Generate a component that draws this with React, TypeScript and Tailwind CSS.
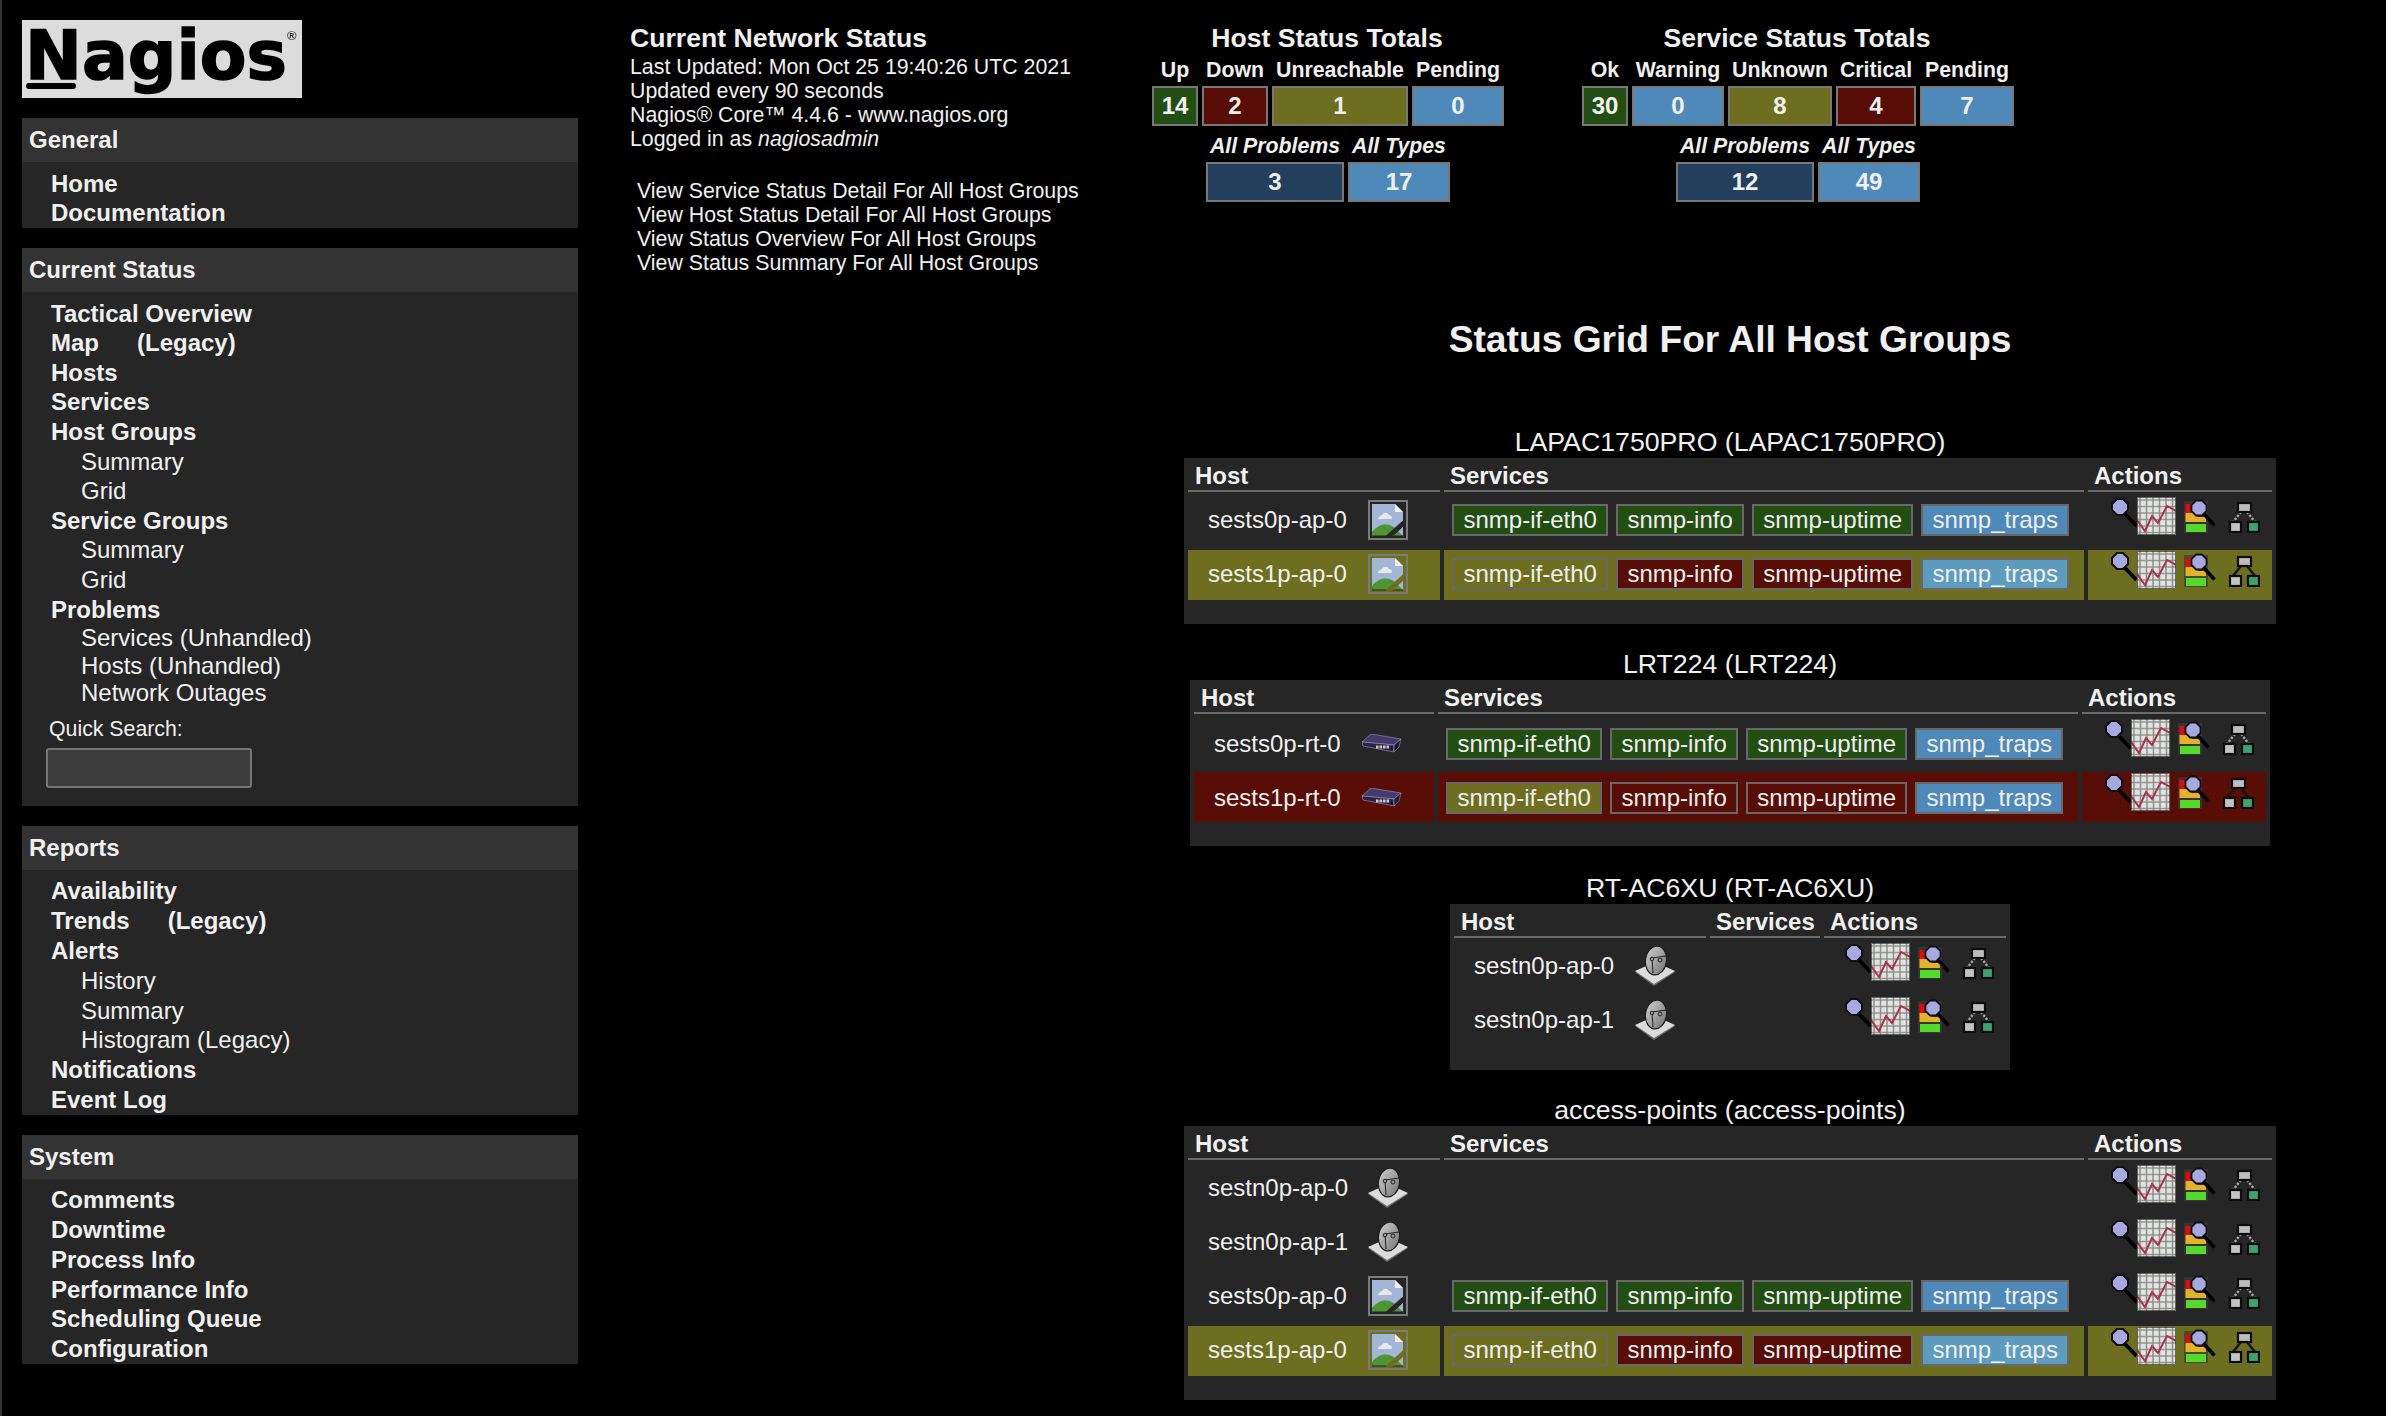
import React from "react";

const FONT = "font-['Liberation_Sans',Arial,sans-serif]";

function Magnifier() {
  return (
    <svg width="27" height="30" viewBox="0 0 27 30" className="shrink-0 mt-px">
      <line x1="13" y1="15" x2="25.5" y2="28" stroke="#000" strokeWidth="3.8" />
      <polygon points="6,1 12,1 17,6 17,12 12,17 6,17 1,12 1,6" fill="#a9a9e2" stroke="#111" strokeWidth="2" />
    </svg>
  );
}

function Chart() {
  const lines = [3, 9.5, 16, 22.5, 29, 35.5];
  return (
    <svg width="39" height="38" viewBox="0 0 39 38" className="shrink-0 -ml-px blur-[0.3px]">
      <rect x="0" y="0" width="39" height="38" fill="#e2e2e2" />
      {lines.map((v) => (
        <g key={v}>
          <line x1={v} y1="0" x2={v} y2="38" stroke="#828282" strokeWidth="1.5" opacity="0.85" />
          <line x1="0" y1={v} x2="39" y2={v} stroke="#84907f" strokeWidth="1.5" opacity="0.85" />
        </g>
      ))}
      <polyline points="0,23 8,34 15,19 21,26 30,9 39,14" fill="none" stroke="#a8324f" strokeWidth="2" />
      <rect x="0.5" y="0.5" width="38" height="37" fill="none" stroke="#333" strokeWidth="1" opacity="0.7" />
    </svg>
  );
}

function StatusMap() {
  return (
    <svg width="32" height="32" viewBox="0 0 32 32" className="shrink-0 ml-2 mt-1 overflow-visible">
      <rect x="0" y="0" width="24" height="32" fill="#3a3a3a" opacity="0.7" />
      <rect x="1.5" y="3" width="5" height="9" fill="#d80e0e" />
      <path d="M1.5 12 H10 L14 16 H22 V21 H1.5 Z" fill="#e4b12e" />
      <rect x="2" y="23" width="20" height="8" fill="#55d92d" />
      <line x1="19" y1="12" x2="30.5" y2="24.5" stroke="#000" strokeWidth="3.6" />
      <polygon points="12,-0.5 18,-0.5 22.5,4 22.5,10 18,14.5 12,14.5 7.5,10 7.5,4" fill="#a9a9e2" stroke="#111" strokeWidth="1.8" />
    </svg>
  );
}

function Hierarchy({ dark }: { dark: boolean }) {
  return (
    <svg width="32" height="32" viewBox="0 0 32 32" className="shrink-0 ml-3 mt-1">
      <g stroke={dark ? "#141414" : "#a8a8a8"} strokeWidth="2.4" strokeDasharray={dark ? undefined : "2.4 1.4"} fill="none">
        <line x1="13" y1="11" x2="5" y2="21" />
        <line x1="19" y1="11" x2="27" y2="21" />
      </g>
      <rect x="10" y="2" width="13" height="9" fill="#bdbdbd" stroke="#0c0c0c" strokeWidth="2.2" />
      <rect x="2" y="21" width="11" height="10" fill="#c3c3c3" stroke="#0c0c0c" strokeWidth="2.2" />
      <rect x="20" y="21" width="11" height="10" fill="#3fa36f" stroke="#0c0c0c" strokeWidth="2.2" />
    </svg>
  );
}

function BrokenImage({ slash }: { slash: string }) {
  return (
    <span className="flex h-10 w-10 shrink-0 items-center justify-center border-2 border-[#7b7b7b]">
      <svg width="36" height="36" viewBox="0 0 36 36">
        <path d="M2 2 H25 L33 10 V34 H2 Z" fill="#a3b6d6" />
        <path d="M25 2 L33 10 H25 Z" fill="#f0f0f0" />
        <path d="M8 17 C8 14 11 14 12 13 C13 10 18 10 19 13 C22 13 23 17 21 17 Z" fill="#e8e8ea" />
        <path d="M2 34 V30 C8 22 18 20 25 26 L33 34 Z" fill="#4d9434" />
        <path d="M2 34 H33" stroke="#222" strokeWidth="1" />
        <line x1="17" y1="36" x2="36" y2="19" stroke={slash} strokeWidth="5" />
      </svg>
    </span>
  );
}

function Router() {
  return (
    <svg width="40" height="19" viewBox="0 0 40 19" className="shrink-0">
      <polygon points="0,8 9,0 39,5 32,11" fill="#453a70" stroke="#b5b1c4" strokeWidth="0.5" />
      <polygon points="0,8 32,11 32,18 1,12" fill="#2a2348" stroke="#b5b1c4" strokeWidth="0.5" />
      <polygon points="32,11 39,5 37,13 32,18" fill="#1d1838" stroke="#b5b1c4" strokeWidth="0.5" />
      {[14, 17.5, 21, 24.5].map((x) => (
        <rect key={x} x={x} y="11.5" width="2.6" height="3" fill="#c9c9d2" />
      ))}
      <rect x="29" y="14" width="2" height="2" fill="#0c0c0c" />
    </svg>
  );
}

function Dish() {
  return (
    <svg width="40" height="40" viewBox="0 0 40 40" className="shrink-0">
      <defs>
        <linearGradient id="dishfill" x1="0" y1="0" x2="1" y2="0.6">
          <stop offset="0" stopColor="#cfcfcf" />
          <stop offset="0.55" stopColor="#a6a6a6" />
          <stop offset="1" stopColor="#808080" />
        </linearGradient>
      </defs>
      <polygon points="0,26 20,17 40,26 19,40" fill="#6e6e6e" />
      <polygon points="0,25 20,16 40,25 19,38" fill="#dcdcdc" />
      <ellipse cx="21" cy="14.5" rx="10.5" ry="14.5" fill="url(#dishfill)" stroke="#1c1c1c" strokeWidth="1.2" transform="rotate(8 21 14.5)" />
      <line x1="17" y1="12" x2="18" y2="27" stroke="#222" strokeWidth="1" />
      <line x1="17" y1="12" x2="31" y2="10" stroke="#222" strokeWidth="1" />
      <circle cx="17" cy="13" r="1.8" fill="#999" stroke="#222" strokeWidth="1" />
      <circle cx="25" cy="14" r="2" fill="#999" stroke="#222" strokeWidth="1" />
    </svg>
  );
}

type PillKind = "ok" | "warn" | "crit" | "pend" | "pendlight";
const pillClass: Record<PillKind, string> = {
  ok: "bg-[#234e13]",
  warn: "bg-[#6e6e20]",
  crit: "bg-[#580d07]",
  pend: "bg-[#4e89b9]",
  pendlight: "bg-[#5d9cbf]",
};

function Pill({ kind, children }: { kind: PillKind; children: React.ReactNode }) {
  return (
    <span className={`flex h-8 items-center border-2 border-[#686868] px-[9.5px] ${pillClass[kind]}`}>{children}</span>
  );
}

function Services({ state }: { state: "ok" | "warnRow" | "critRow" }) {
  const k: PillKind[] =
    state === "ok"
      ? ["ok", "ok", "ok", "pend"]
      : state === "warnRow"
        ? ["warn", "crit", "crit", "pendlight"]
        : ["warn", "crit", "crit", "pend"];
  return (
    <div className="flex items-center gap-[7.5px] pl-2">
      <Pill kind={k[0]}>snmp-if-eth0</Pill>
      <Pill kind={k[1]}>snmp-info</Pill>
      <Pill kind={k[2]}>snmp-uptime</Pill>
      <Pill kind={k[3]}>snmp_traps</Pill>
    </div>
  );
}

type RowData = {
  name: string;
  icon: "broken" | "router" | "dish";
  state?: "ok" | "warnRow" | "critRow";
  services?: boolean;
};

function GridTable({
  title,
  rows,
  width,
  col1,
  col2,
  col3,
  nameW,
  titleClass,
  nudge,
}: {
  title: string;
  rows: RowData[];
  width: string;
  col1: string;
  col2: string;
  col3: string;
  nameW: string;
  titleClass: string;
  nudge: string;
}) {
  const bgFor = (s?: string) => (s === "warnRow" ? "bg-[#6e6e20]" : s === "critRow" ? "bg-[#580d07]" : "");
  const th = "h-[30px] border-b-2 border-[#6a6a6a] pl-[7px] font-bold leading-[28px]";
  const th2 = "h-[30px] border-b-2 border-[#6a6a6a] pl-[6px] font-bold leading-[28px]";
  return (
    <section className={`flex flex-col items-center ${titleClass}`}>
      <h2 className="h-8 text-center text-[26.7px] font-normal leading-8 text-[#f0f0f0]">{title}</h2>
      <div className={`flex flex-col gap-1 bg-[#262626] p-1 pb-6 ${width}`}>
        <div className="flex gap-1">
          <div className={`${th} ${col1}`}>Host</div>
          <div className={`${th2} ${col2}`}>Services</div>
          <div className={`${th2} ${col3}`}>Actions</div>
        </div>
        {rows.map((r, i) => {
          const bg = bgFor(r.state);
          return (
            <div key={i} className="flex h-[50px] gap-1">
              <div className={`flex items-center pl-5 ${nudge} ${col1} ${bg}`}>
                <span className={nameW}>{r.name}</span>
                {r.icon === "broken" && <BrokenImage slash={r.state === "warnRow" ? "#6e6e20" : "#262626"} />}
                {r.icon === "router" && <Router />}
                {r.icon === "dish" && <Dish />}
              </div>
              <div className={`flex items-center ${nudge} ${col2} ${bg}`}>
                {r.services && <Services state={r.state ?? "ok"} />}
              </div>
              <div className={`flex items-start justify-end pr-3 pt-px ${col3} ${bg}`}>
                <Magnifier />
                <Chart />
                <StatusMap />
                <Hierarchy dark={!!r.state && r.state !== "ok"} />
              </div>
            </div>
          );
        })}
      </div>
    </section>
  );
}

function Box({ w, bg, label, value, italic }: { w: string; bg: string; label: string; value: string; italic?: boolean }) {
  return (
    <div className={`flex flex-col items-center ${w}`}>
      <div className={`h-8 whitespace-nowrap text-[21.3px] font-bold leading-8 ${italic ? "italic" : ""}`}>{label}</div>
      <div className={`flex h-10 w-full items-center justify-center border-2 border-[#777777] text-[24px] font-bold ${bg}`}>{value}</div>
    </div>
  );
}

const G = "bg-[#234e13]";
const R = "bg-[#580d07]";
const O = "bg-[#6e6e20]";
const B = "bg-[#4e89b9]";
const D = "bg-[#223f5c]";

function Totals() {
  return (
    <div className="flex pt-4">
      <div className="flex w-[352px] flex-col">
        <h2 className="h-[38px] pt-[6px] text-center text-[26.6px] font-bold leading-[32px] pr-[2px]">Host Status Totals</h2>
        <div className="flex gap-1">
          <Box w="w-[46px]" bg={G} label="Up" value="14" />
          <Box w="w-[66px]" bg={R} label="Down" value="2" />
          <Box w="w-[136px]" bg={O} label="Unreachable" value="1" />
          <Box w="w-[92px]" bg={B} label="Pending" value="0" />
        </div>
        <div className="mt-1 flex gap-1 pl-[54px]">
          <Box w="w-[138px]" bg={D} label="All Problems" value="3" italic />
          <Box w="w-[102px]" bg={B} label="All Types" value="17" italic />
        </div>
      </div>
      <div className="ml-[78px] flex w-[432px] flex-col">
        <h2 className="h-[38px] pt-[6px] text-center text-[26.6px] font-bold leading-[32px] pr-[2px]">Service Status Totals</h2>
        <div className="flex gap-1">
          <Box w="w-[46px]" bg={G} label="Ok" value="30" />
          <Box w="w-[92px]" bg={B} label="Warning" value="0" />
          <Box w="w-[104px]" bg={O} label="Unknown" value="8" />
          <Box w="w-[80px]" bg={R} label="Critical" value="4" />
          <Box w="w-[94px]" bg={B} label="Pending" value="7" />
        </div>
        <div className="mt-1 flex gap-1 pl-[94px]">
          <Box w="w-[138px]" bg={D} label="All Problems" value="12" italic />
          <Box w="w-[102px]" bg={B} label="All Types" value="49" italic />
        </div>
      </div>
    </div>
  );
}

function Item({ children, sub, tight, wide }: { children: React.ReactNode; sub?: boolean; tight?: boolean; wide?: boolean }) {
  return (
    <div
      className={`whitespace-nowrap text-[24px] ${tight ? "leading-[27.6px]" : wide ? "leading-[29.8px]" : "leading-[29.6px]"} ${
        sub ? "pl-[59px] font-normal" : "pl-[29px] font-bold"
      }`}
    >
      {children}
    </div>
  );
}

function Section({ title, children }: { title: string; children: React.ReactNode }) {
  return (
    <div className="mt-5 bg-[#262626] first:mt-0">
      <div className="h-11 bg-[#333333] pl-[7px] text-[24px] font-bold leading-[44px]">{title}</div>
      <div className="pt-[6.5px]">{children}</div>
    </div>
  );
}

function Sidebar() {
  return (
    <aside className="ml-5 w-[556px] shrink-0 pt-5">
      <div className="relative h-[78px] w-[280px] bg-[#dcdcdc] blur-[0.4px]">
        <span className="absolute left-[3px] top-[-9px] whitespace-nowrap font-['DejaVu_Sans',sans-serif] text-[68px] font-bold leading-[90px] text-black [-webkit-text-stroke:1.5px_black]">
          Nagios
        </span>
        <span className="absolute left-1 top-[63px] h-1.5 w-[50px] rounded-full bg-black" />
        <span className="absolute left-[265px] top-[8px] text-[13px] font-bold leading-4 text-[#333]">®</span>
      </div>
      <div className="mt-5">
        <Section title="General">
          <Item wide>Home</Item>
          <Item wide>Documentation</Item>
        </Section>
        <Section title="Current Status">
          <Item>Tactical Overview</Item>
          <Item>
            Map<span className="ml-[38px]">(Legacy)</span>
          </Item>
          <Item>Hosts</Item>
          <Item>Services</Item>
          <Item>Host Groups</Item>
          <Item sub>Summary</Item>
          <Item sub>Grid</Item>
          <Item>Service Groups</Item>
          <Item sub>Summary</Item>
          <Item sub>Grid</Item>
          <Item>Problems</Item>
          <Item sub tight>Services (Unhandled)</Item>
          <Item sub tight>Hosts (Unhandled)</Item>
          <Item sub tight>Network Outages</Item>
          <div className="mt-[10px] pb-[18px] pl-[27px]">
            <div className="h-6 text-[21.3px] leading-6">Quick Search:</div>
            <input
              aria-label="Quick Search"
              className="mt-[7px] block h-10 w-[206px] -translate-x-[3px] rounded-[3px] border-2 border-[#777777] bg-[#3c3c3c]"
            />
          </div>
        </Section>
        <Section title="Reports">
          <Item wide>Availability</Item>
          <Item wide>
            Trends<span className="ml-[38px]">(Legacy)</span>
          </Item>
          <Item wide>Alerts</Item>
          <Item wide sub>History</Item>
          <Item wide sub>Summary</Item>
          <Item wide sub>Histogram (Legacy)</Item>
          <Item wide>Notifications</Item>
          <Item wide>Event Log</Item>
        </Section>
        <Section title="System">
          <Item wide>Comments</Item>
          <Item wide>Downtime</Item>
          <Item wide>Process Info</Item>
          <Item wide>Performance Info</Item>
          <Item wide>Scheduling Queue</Item>
          <Item wide>Configuration</Item>
        </Section>
      </div>
    </aside>
  );
}

const brokenRows: RowData[] = [
  { name: "sests0p-ap-0", icon: "broken", state: "ok", services: true },
  { name: "sests1p-ap-0", icon: "broken", state: "warnRow", services: true },
];

export default function App() {
  return (
    <div className={`relative flex h-[1416px] w-[2386px] overflow-hidden bg-black text-[#f0f0f0] ${FONT} text-[24px]`}>
      <div className="w-[2px] shrink-0 bg-[#333333]" />
      <Sidebar />
      <main className="ml-[52px] flex-1">
        <div className="flex">
          <div className="w-[522px] shrink-0 text-[21.33px] leading-6">
            <h1 className="h-[55px] pt-[22px] text-[26.6px] font-bold leading-8">Current Network Status</h1>
            <div>Last Updated: Mon Oct 25 19:40:26 UTC 2021</div>
            <div>Updated every 90 seconds</div>
            <div>Nagios® Core™ 4.4.6 - www.nagios.org</div>
            <div>
              Logged in as <i>nagiosadmin</i>
            </div>
            <div className="mt-[28px] pl-[7px]">
              <div>View Service Status Detail For All Host Groups</div>
              <div>View Host Status Detail For All Host Groups</div>
              <div>View Status Overview For All Host Groups</div>
              <div>View Status Summary For All Host Groups</div>
            </div>
          </div>
          <Totals />
        </div>
      </main>
      <div className="absolute left-[1184px] top-0 flex w-[1092px] flex-col items-center">
        <h1 className="mt-[315px] h-12 text-[37.2px] font-bold leading-[48px]">Status Grid For All Host Groups</h1>
        <GridTable
          title="LAPAC1750PRO (LAPAC1750PRO)"
          titleClass="mt-[63px]"
          width="w-[1092px]"
          col1="w-[252px]"
          col2="w-[640px]"
          col3="w-[184px]"
          nameW="w-[160px]"
          nudge="pb-[2px]"
          rows={brokenRows}
        />
        <GridTable
          title="LRT224 (LRT224)"
          titleClass="mt-[24px]"
          width="w-[1080px]"
          col1="w-[240px]"
          col2="w-[640px]"
          col3="w-[184px]"
          nameW="w-[148px]"
          nudge="pt-[1px]"
          rows={[
            { name: "sests0p-rt-0", icon: "router", state: "ok", services: true },
            { name: "sests1p-rt-0", icon: "router", state: "critRow", services: true },
          ]}
        />
        <GridTable
          title="RT-AC6XU (RT-AC6XU)"
          titleClass="mt-[26px]"
          width="w-[560px]"
          col1="w-[252px]"
          col2="w-[110px]"
          col3="w-[182px]"
          nameW="w-[161px]"
          nudge="pb-[2px]"
          rows={[
            { name: "sestn0p-ap-0", icon: "dish" },
            { name: "sestn0p-ap-1", icon: "dish" },
          ]}
        />
        <GridTable
          title="access-points (access-points)"
          titleClass="mt-[24px]"
          width="w-[1092px]"
          col1="w-[252px]"
          col2="w-[640px]"
          col3="w-[184px]"
          nameW="w-[160px]"
          nudge="pb-[2px]"
          rows={[
            { name: "sestn0p-ap-0", icon: "dish" },
            { name: "sestn0p-ap-1", icon: "dish" },
            ...brokenRows,
          ]}
        />
      </div>
    </div>
  );
}
